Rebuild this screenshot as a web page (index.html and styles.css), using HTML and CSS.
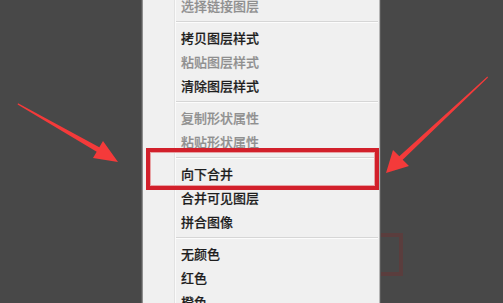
FILE: index.html
```html
<!DOCTYPE html>
<html>
<head>
<meta charset="utf-8">
<link rel="stylesheet" href="styles.css">
</head>
<body>
<div class="scene">
  <div class="ghost-box"></div>
  <div class="menu">
    <div class="item disabled">选择链接图层</div>
    <div class="sep"></div>
    <div class="item">拷贝图层样式</div>
    <div class="item disabled">粘贴图层样式</div>
    <div class="item">清除图层样式</div>
    <div class="sep"></div>
    <div class="item disabled">复制形状属性</div>
    <div class="item disabled">粘贴形状属性</div>
    <div class="sep"></div>
    <div class="item">向下合并</div>
    <div class="item">合并可见图层</div>
    <div class="item">拼合图像</div>
    <div class="sep"></div>
    <div class="item">无颜色</div>
    <div class="item">红色</div>
    <div class="item">橙色</div>
  </div>
  <div class="highlight"></div>
  <svg class="arrows" width="503" height="303" viewBox="0 0 503 303">
    <polygon points="18,103.3 99.3,147.3 103,141 118,162 93,158 96.7,151.7 17.6,104.6" />
    <polygon points="487.4,76.6 399.3,156.2 393,150 386,173 409,166 402.7,159.8 488,77.6" />
  </svg>
</div>
</body>
</html>
```
FILE: styles.css
```css
html, body {
  margin: 0;
  padding: 0;
  background: #484848;
}
.scene {
  position: relative;
  width: 503px;
  height: 303px;
  overflow: hidden;
  background: #484848;
  display: flex;
  align-items: flex-start;
}
.ghost-box {
  position: absolute;
  left: 360px;
  top: 233px;
  width: 35px;
  height: 35px;
  border: 4px solid #5a3d3d;
}
.menu {
  position: relative;
  margin-left: 142px;
  margin-top: -6px;
  width: 236px;
  height: 330px;
  background: #f0f0f0;
  border-left: 1px solid #8e8e8e;
  border-right: 1px solid #b4b4b4;
  box-shadow: 1px 0 0 #5a5a5a, -1px 0 0 #5c5c5c;
  font-family: "Noto Sans CJK SC", "Noto Sans", sans-serif;
  font-size: 13px;
  color: #1e1e1e;
}
.menu::before {
  content: "";
  position: absolute;
  left: 31px;
  top: 0;
  bottom: 0;
  width: 1px;
  background: #e2e2e2;
  box-shadow: 1px 0 0 #fafafa;
}
.item {
  position: relative;
  height: 24px;
  line-height: 24px;
  padding-left: 38px;
  font-weight: 500;
  -webkit-text-stroke: 0.2px #1e1e1e;
}
.item.disabled {
  color: #8f8f8f;
  -webkit-text-stroke: 0.2px #8f8f8f;
}
.sep {
  position: relative;
  height: 8px;
}
.sep::after {
  content: "";
  position: absolute;
  left: 33px;
  right: 1px;
  top: 3px;
  height: 1px;
  background: #d6d6d6;
  box-shadow: 0 1px 0 #fcfcfc;
}
.highlight {
  position: absolute;
  left: 146px;
  top: 148px;
  width: 225px;
  height: 34px;
  border: 4px solid #d2202b;
  box-shadow: inset 0 0 0 1px #e7a2a4;
}
.arrows {
  position: absolute;
  left: 0;
  top: 0;
}
.arrows polygon {
  fill: #f43a3a;
}
```
